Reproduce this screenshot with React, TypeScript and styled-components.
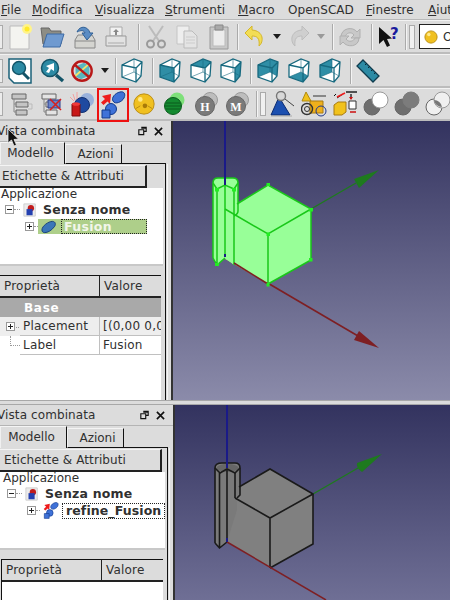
import styled, { createGlobalStyle } from 'styled-components';

const GlobalStyle = createGlobalStyle`
  html, body {
    margin: 0;
    padding: 0;
    background: #dcdcdc;
    font-family: 'DejaVu Sans', sans-serif;
  }
`;

const Screen = styled.div`
  position: relative;
  width: 450px;
  height: 600px;
  overflow: hidden;
  background: #dcdcdc;
  color: #303030;
  font-size: 12px;
`;

const MenuBar = styled.div`
  display: flex;
  height: 20px;
  align-items: center;
  padding-left: 1px;
  white-space: nowrap;
  border-bottom: 1px solid #b8b8b8;
  box-sizing: border-box;
`;

const MenuItem = styled.span<{ $w: number }>`
  flex: 0 0 ${(p) => p.$w}px;
  font-size: 12px;
  letter-spacing: 0.05px;
  u {
    text-underline-offset: 1px;
  }
`;

const Toolbar = styled.div<{ $h: number }>`
  display: flex;
  align-items: center;
  height: ${(p) => p.$h}px;
  box-sizing: border-box;
  border-bottom: 2px solid #bcbcbc;
  border-top: 1px solid #f2f2f2;
`;

const Handle = styled.div<{ $gap?: number }>`
  flex: 0 0 3px;
  height: 24px;
  margin: 0 ${(p) => p.$gap ?? 1}px 0 0;
  background: #ececec;
  border: 1px solid #aaa;
  border-left: none;
  box-sizing: border-box;
`;

const GripHandle = styled.div<{ $mr?: number }>`
  flex: 0 0 6px;
  height: 24px;
  margin: 0 ${(p) => p.$mr ?? 4}px 0 3px;
  box-sizing: border-box;
  background: #f0f0f0;
  border: 1px solid #aaa;
`;

const Separator = styled.div<{ $ml: number; $mr: number }>`
  flex: 0 0 1px;
  height: 26px;
  margin: 0 ${(p) => p.$mr}px 0 ${(p) => p.$ml}px;
  background: #aaa;
  box-shadow: 1px 0 0 #f4f4f4;
`;

const ToolButton = styled.div<{ $w?: number; $marked?: boolean }>`
  flex: 0 0 ${(p) => p.$w ?? 31}px;
  height: ${(p) => (p.$marked ? 34 : 31)}px;
  margin-top: ${(p) => (p.$marked ? 1 : 0)}px;
  display: flex;
  align-items: center;
  justify-content: center;
  box-sizing: border-box;
  border: 2px solid ${(p) => (p.$marked ? '#ee1111' : 'transparent')};
`;

const Arrow = styled.div<{ $dim?: boolean }>`
  flex: 0 0 0;
  margin: 0 5px;
  border-left: 4px solid transparent;
  border-right: 4px solid transparent;
  border-top: 5px solid ${(p) => (p.$dim ? '#9a9a9a' : '#1c1c1c')};
`;

const ComboBox = styled.div`
  display: flex;
  align-items: center;
  flex: 0 0 60px;
  gap: 5px;
  height: 23px;
  padding-left: 4px;
  background: #fff;
  border: 1px solid #222;
  border-right: none;
  font-size: 12px;
`;

const Main = styled.div<{ $h: number }>`
  display: flex;
  height: ${(p) => p.$h}px;
`;

const Dock = styled.div<{ $w: number }>`
  flex: 0 0 ${(p) => p.$w}px;
  display: flex;
  flex-direction: column;
  overflow: hidden;
`;

const DockTitle = styled.div`
  display: flex;
  align-items: center;
  height: 21px;
  flex: 0 0 21px;
  padding-right: 8px;
  box-sizing: border-box;
  justify-content: space-between;
  font-size: 12px;
  letter-spacing: 0.1px;
  border-bottom: 1px solid #b4b4b4;
  white-space: nowrap;
`;

const DockName = styled.span`
  margin-left: -3px;
`;

const DockButtons = styled.div`
  display: flex;
  gap: 7px;
  align-items: center;
`;

const Tabs = styled.div`
  display: flex;
  flex: 0 0 22px;
  align-items: flex-end;
  margin-right: 5px;
`;

const Tab = styled.div<{ $active?: boolean; $w: number }>`
  flex: 0 0 ${(p) => p.$w}px;
  box-sizing: border-box;
  height: ${(p) => (p.$active ? 22 : 20)}px;
  display: flex;
  align-items: center;
  justify-content: center;
  padding: ${(p) => (p.$active ? '0 4px 2px 0' : '0 0 0 4px')};
  font-size: 12px;
  border-top: 1px solid #f4f4f4;
  border-right: 1px solid #111;
  border-left: 1px solid #f0f0f0;
  border-bottom: ${(p) => (p.$active ? 'none' : '1px solid #111')};
`;

const TabFill = styled.div`
  flex: 1;
  border-bottom: 1px solid #111;
`;

const DockBody = styled.div`
  flex: 1;
  display: flex;
  padding-right: 2px;
  border-right: 3px solid #dcdcdc;
  box-shadow: inset -1px 0 0 #f4f4f4;
  min-height: 0;
`;

const Pane = styled.div`
  flex: 1;
  display: flex;
  flex-direction: column;
  min-width: 0;
  padding-right: 2px;
  border-right: 1px solid #111;
`;

const TreeHeader = styled.div<{ $w: number; $pl: number }>`
  width: ${(p) => p.$w}px;
  height: 23px;
  flex: 0 0 23px;
  box-sizing: border-box;
  display: flex;
  align-items: center;
  padding-left: ${(p) => p.$pl}px;
  margin-top: 1px;
  font-size: 12px;
  letter-spacing: 0.1px;
  white-space: nowrap;
  border-right: 2px solid #222;
  border-bottom: 2px solid #222;
  border-top: 1px solid #f4f4f4;
`;

const TreeArea = styled.div<{ $pl: number }>`
  height: 78px;
  flex: 0 0 78px;
  background: #fff;
  padding-left: ${(p) => p.$pl}px;
  box-sizing: border-box;
  border-bottom: 2px solid #c8c8c8;
`;

const AppLabel = styled.div`
  height: 13px;
  line-height: 13px;
  font-size: 12px;
`;

const TreeRow = styled.div<{ $indent: number }>`
  display: flex;
  align-items: center;
  height: 17px;
  padding-left: ${(p) => p.$indent}px;
  white-space: nowrap;
`;

const Expander = styled.span`
  flex: 0 0 7px;
  height: 7px;
  border: 1px solid #999;
  position: relative;
  background: #fff;
  &::before {
    content: '';
    position: absolute;
    left: 1px;
    right: 1px;
    top: 3px;
    height: 1px;
    background: #222;
  }
`;

const PlusExpander = styled(Expander)`
  &::after {
    content: '';
    position: absolute;
    top: 1px;
    bottom: 1px;
    left: 3px;
    width: 1px;
    background: #222;
  }
`;

const Connector = styled.span<{ $w: number; $mr: number }>`
  flex: 0 0 ${(p) => p.$w}px;
  margin-right: ${(p) => p.$mr}px;
  border-top: 1px dotted #999;
`;

const DocName = styled.span`
  margin-left: 6px;
  font-weight: 700;
  font-size: 12.5px;
  letter-spacing: 0.2px;
`;

const SelectedChip = styled.span`
  display: inline-flex;
  align-items: center;
  gap: 5px;
  height: 15px;
  width: 109px;
  padding-left: 3px;
  box-sizing: border-box;
  background: #aecf8a;
`;

const SelectedLabel = styled.span`
  flex: 1;
  height: 13px;
  line-height: 13px;
  padding-left: 2px;
  color: #f2f6ea;
  font-weight: 700;
  font-size: 12.5px;
  letter-spacing: 0.3px;
  border: 1px dotted #222;
`;

const RefinedIcon = styled.span`
  display: flex;
  margin-left: 3px;
`;

const FocusedLabel = styled.span`
  margin-left: 3px;
  height: 14px;
  line-height: 14px;
  padding: 0 3px;
  font-weight: 700;
  font-size: 12.5px;
  letter-spacing: 0.1px;
  border: 1px dotted #222;
`;

const Gap = styled.div`
  flex: 0 0 9px;
`;

const PropTable = styled.div<{ $ml: number }>`
  flex: 1;
  display: flex;
  flex-direction: column;
  background: #fff;
  margin: 0 2px 0 ${(p) => p.$ml}px;
  border-top: 1px solid #111;
  box-shadow: ${(p) => (p.$ml ? '-1px 0 0 #111' : 'none')};
`;

const PropHeader = styled.div`
  display: grid;
  grid-template-columns: 99px 1fr;
  flex: 0 0 22px;
  box-sizing: border-box;
  border-bottom: 2px solid #222;
  background: #dcdcdc;
`;

const PropHeaderCell = styled.div`
  display: flex;
  align-items: center;
  padding-left: 4px;
  font-size: 12px;
  letter-spacing: 0.2px;
  & + & {
    border-left: 1px solid #222;
  }
`;

const GroupRow = styled.div`
  flex: 0 0 19px;
  display: flex;
  align-items: center;
  padding-left: 24px;
  background: #a9a9a9;
  color: #fff;
  font-weight: 700;
  font-size: 12px;
  letter-spacing: 0.7px;
`;

const PropRow = styled.div<{ $shaded?: boolean }>`
  display: grid;
  grid-template-columns: 20px 79px 1fr;
  flex: 0 0 19px;
  box-sizing: border-box;
  white-space: nowrap;
  overflow: hidden;
  background: ${(p) => (p.$shaded ? '#eeeeee' : '#fff')};
`;

const PropGutter = styled.div<{ $last?: boolean }>`
  position: relative;
  display: flex;
  align-items: center;
  padding-left: 6px;
  font-size: 12px;
  &::after {
    content: '';
    position: absolute;
    left: 10px;
    top: ${(p) => (p.$last ? '0' : '50%')};
    width: 9px;
    height: ${(p) => (p.$last ? '9px' : '0')};
    border-left: ${(p) => (p.$last ? '1px dotted #999' : 'none')};
    border-bottom: 1px dotted #999;
    z-index: 0;
  }
  & > * {
    z-index: 1;
  }
`;

const PropCell = styled.div`
  display: flex;
  align-items: center;
  padding-left: 3px;
  font-size: 12px;
  letter-spacing: 0.2px;
  overflow: hidden;
  border-bottom: 1px solid #c0c0c0;
  & + & {
    border-left: 1px solid #c0c0c0;
  }
`;

const Viewport = styled.div`
  flex: 1;
  min-width: 0;
  border-left: 2px solid #333;
  display: flex;
`;

const ViewSvg = styled.svg`
  display: block;
  width: 100%;
  height: 100%;
`;

const Split = styled.div`
  height: 5px;
  background: #dcdcdc;
  border-top: 1px solid #a8a8a8;
  border-bottom: 1px solid #a8a8a8;
  box-sizing: border-box;
`;

const Cursor = styled.svg`
  position: absolute;
  left: 7px;
  top: 128px;
`;

const MirroredSvg = styled.svg`
  transform: scaleX(-1);
`;

type Face = 'none' | 'front' | 'top' | 'right' | 'left' | 'rear' | 'bottom';

const ViewCube = ({ face }: { face: Face }) => {
  const teal = '#2f8ea6';
  const outline = 'M2 8 L14 2 L22 5 L21 19 L16 25 L2 20 Z';
  return (
    <svg width="24" height="27" viewBox="0 0 24 27">
      <path d={outline} fill="#fff" />
      {face === 'front' && <path d="M2 8 L16 11 L16 25 L2 20 Z" fill={teal} />}
      {face === 'top' && <path d="M2 8 L14 2 L22 5 L16 11 Z" fill={teal} />}
      {face === 'right' && <path d="M16 11 L22 5 L21 19 L16 25 Z" fill={teal} />}
      {face === 'rear' && <path d="M2 8 L14 2 L14 15 L2 20 Z M14 2 L22 5 L21 19 L14 15 Z" fill={teal} />}
      {face === 'bottom' && <path d="M2 20 L14 15 L21 19 L16 25 Z" fill={teal} />}
      {face === 'left' && <path d="M2 8 L14 2 L14 15 L2 20 Z" fill={teal} />}
      <path d={`${outline} M2 8 L16 11 L22 5 M16 11 V25`} fill="none" stroke="#17697f" strokeWidth="1.3" />
      <path d="M14 2 V15 L2 20 M14 15 L21 19" fill="none" stroke="#17697f" strokeWidth="0.6" />
    </svg>
  );
};

const NewDoc = () => (
  <svg width="26" height="28" viewBox="0 0 26 28">
    <path d="M3 3 H22 V26 H3 Z" fill="#f4f4f0" stroke="#bbb" />
    <circle cx="20" cy="6" r="5" fill="#fff38a" />
    <circle cx="20" cy="6" r="2.5" fill="#ffe92a" />
  </svg>
);

const OpenDoc = () => (
  <svg width="26" height="26" viewBox="0 0 26 26">
    <path d="M2 4 H10 L12 7 H22 V20 H4 Z" fill="#8d8d85" stroke="#666" />
    <path d="M8 10 H25 L21 23 H4 Z" fill="#6f9ad0" stroke="#3d6aa5" />
  </svg>
);

const SaveDoc = () => (
  <svg width="26" height="26" viewBox="0 0 26 26">
    <path d="M3 16 L6 11 H20 L23 16 V24 H3 Z" fill="#d4d4d0" stroke="#888" />
    <path d="M3 17 H23" stroke="#888" />
    <path d="M5 8 C8 1 16 2 18 9 L21 9 L15 16 L10 9 L13 9 C12 6 9 6 5 8 Z" fill="#5a8cc4" stroke="#2f5f95" />
  </svg>
);

const PrintDoc = () => (
  <svg width="26" height="26" viewBox="0 0 26 26">
    <path d="M7 3 H19 V12 H7 Z" fill="#f2f2f2" stroke="#aaa" />
    <path d="M3 12 H23 V22 H3 Z" fill="#e2e2e2" stroke="#999" />
    <path d="M13 5 L16 8 H14 V11 H12 V8 H10 Z" fill="#888" />
    <path d="M5 19 H21" stroke="#aaa" />
  </svg>
);

const Scissors = () => (
  <svg width="24" height="26" viewBox="0 0 24 26" fill="none" stroke="#9a9a9a" strokeWidth="1.6">
    <path d="M5 2 L15 17 M19 2 L9 17" stroke="#bbb" strokeWidth="2" />
    <circle cx="6.5" cy="20" r="3.5" strokeWidth="2" />
    <circle cx="17.5" cy="20" r="3.5" strokeWidth="2" />
  </svg>
);

const CopyDoc = () => (
  <svg width="24" height="26" viewBox="0 0 24 26">
    <path d="M2 2 H14 V20 H2 Z" fill="#eee" stroke="#c4c4c4" />
    <path d="M9 7 H17 L22 12 V24 H9 Z" fill="#e4e4e4" stroke="#bbb" />
    <path d="M11 13 H20 M11 16 H20 M11 19 H20" stroke="#ccc" />
  </svg>
);

const Paste = () => (
  <svg width="22" height="28" viewBox="0 0 22 28">
    <path d="M2 4 H20 V26 H2 Z" fill="#c8c8c8" stroke="#9a9a9a" />
    <path d="M5 7 H17 V23 H5 Z" fill="#ececec" stroke="#bbb" />
    <path d="M7 2 H15 V7 H7 Z" fill="#aaa" stroke="#888" />
  </svg>
);

const Undo = () => (
  <svg width="22" height="24" viewBox="0 0 22 24">
    <path d="M8 1 L1 8 L8 15 V11 C13 11 16 13 15 21 C20 17 20 6 8 5 Z" fill="#f2dd55" stroke="#d4b62a" />
  </svg>
);

const Redo = () => (
  <MirroredSvg width="22" height="24" viewBox="0 0 22 24">
    <path d="M8 1 L1 8 L8 15 V11 C13 11 16 13 15 21 C20 17 20 6 8 5 Z" fill="#cfcfcf" stroke="#bdbdbd" />
  </MirroredSvg>
);

const Refresh = () => (
  <svg width="24" height="24" viewBox="0 0 24 24" fill="#c8c8c8" stroke="#b0b0b0">
    <path d="M3 12 C3 3 15 1 19 7 L22 4 V13 H13 L16 10 C13 6 8 8 7 12 Z" />
    <path d="M21 13 C21 22 9 23 5 17 L2 20 V11 H11 L8 14 C11 18 16 16 17 13 Z" />
  </svg>
);

const WhatsThis = () => (
  <svg width="24" height="24" viewBox="0 0 24 24">
    <path d="M2 2 L2 19 L6.5 15 L10 22 L13 20.5 L10 14 L15 13.5 Z" fill="#111" />
    <text x="13" y="14" fontSize="15" fontWeight="700" fontFamily="DejaVu Sans" fill="#1a1a9c">?</text>
  </svg>
);

const FitAll = () => (
  <svg width="26" height="28" viewBox="0 0 26 28">
    <path d="M2 2 H24 V26 H7 L2 21 Z" fill="#fff" stroke="#1a6078" strokeWidth="1.5" />
    <circle cx="12" cy="11" r="6.5" fill="#2c8aa4" stroke="#135468" strokeWidth="1.4" />
    <path d="M16 16 L22 22" stroke="#135468" strokeWidth="3" />
  </svg>
);

const FitSelection = () => (
  <svg width="26" height="26" viewBox="0 0 26 26">
    <circle cx="11" cy="10" r="8.5" fill="#2c8aa4" stroke="#135468" strokeWidth="1.5" />
    <path d="M15 5 L7 8 L10 10 L7 14 L10 15 L12 11 L15 13 Z" fill="#fff" />
    <path d="M17 17 L24 23" stroke="#135468" strokeWidth="3.4" />
  </svg>
);

const NoDraw = () => (
  <svg width="24" height="24" viewBox="0 0 26 26">
    <path d="M6 8 L15 4 L21 7 L21 18 L12 22 L6 19 Z" fill="#58b6c0" />
    <path d="M5 19 L21 5" stroke="#f3e26a" strokeWidth="2" />
    <circle cx="13" cy="13" r="10.5" fill="none" stroke="#b81818" strokeWidth="2.6" />
    <path d="M5 6 L21 20" stroke="#b81818" strokeWidth="2.6" />
  </svg>
);

const Measure = () => (
  <svg width="24" height="24" viewBox="0 0 24 24">
    <path d="M7 1 L23 17 L17 23 L1 7 Z" fill="#2c8aa4" stroke="#103c4e" strokeWidth="1.3" />
    <path d="M9 6 L11 4 M12 9 L14 7 M15 12 L17 10 M18 15 L20 13" stroke="#0c2d3a" />
  </svg>
);

const TreeViewIcon = ({ crossed }: { crossed?: boolean }) => (
  <svg width="24" height="26" viewBox="0 0 24 26">
    <path d="M2 3 H16 V8 H2 Z M6 11 H18 V16 H6 Z M6 19 H17 V24 H6 Z" fill={crossed ? '#e4e4e4' : '#c4c4c4'} stroke="#666" />
    <path d="M4 8 V21 H6 M4 13 H6" fill="none" stroke="#888" />
    {crossed && <path d="M8 9 H20 V17 H8 Z" fill="#6a86c8" stroke="#2a3a8a" />}
    {crossed && <path d="M10 8 L21 19 M21 8 L10 19" stroke="#d42020" strokeWidth="1.6" />}
    {!crossed && <path d="M18 13 H22 V18 H18" fill="none" stroke="#bbb" />}
  </svg>
);

const Primitives = () => (
  <svg width="26" height="26" viewBox="0 0 26 26">
    <circle cx="18" cy="9" r="7" fill="#9ab2dc" />
    <circle cx="13" cy="14" r="7.5" fill="#1f4aa0" stroke="#123070" />
    <path d="M3 13 H11 V25 H3 Z" fill="#c81818" stroke="#7c0c0c" />
    <ellipse cx="7" cy="13" rx="4" ry="1.8" fill="#ee3a3a" />
    <path d="M4 3 L6 9 M8 1 L8 8 M1 6 L5 10" stroke="#f2a0a0" />
  </svg>
);

const RefineIcon = ({ w = 26, h = 28 }: { w?: number; h?: number }) => (
  <svg width={w} height={h} viewBox="0 0 26 28">
    <path d="M2 5 L11 3 L10 13 L7.5 10.5 L3.5 14 L1 11.5 L5 8 Z" fill="#ee1c1c" />
    <path d="M13 10 C11 7 15 2 20 1 C24 0 26 3 24 7 C22 11 15 14 13 10 Z" fill="#3f72d8" stroke="#123a8c" />
    <circle cx="11" cy="18" r="5.5" fill="#3f72d8" stroke="#123a8c" />
    <path d="M2 19 H10 V27 H2 Z" fill="#3f72d8" stroke="#123a8c" />
  </svg>
);

const Revolve = () => (
  <svg width="24" height="24" viewBox="0 0 26 26">
    <circle cx="13" cy="13" r="11" fill="#f0c020" stroke="#b78a10" />
    <circle cx="9" cy="8" r="2.5" fill="#ffe98a" />
    <circle cx="14" cy="15" r="2.5" fill="#a87a08" />
    <path d="M4 18 L9 15 M22 18 L17 15" stroke="#b78a10" />
  </svg>
);

const GreenBalls = () => (
  <svg width="26" height="26" viewBox="0 0 26 26">
    <circle cx="15" cy="9" r="7.5" fill="#7ee07a" />
    <circle cx="11" cy="15" r="8.5" fill="#148a30" stroke="#0a5a1c" />
    <path d="M4 12 H18 M3 15 H19 M4 18 H18" stroke="#0a5a1c" />
  </svg>
);

const LetterBalls = ({ letter }: { letter: string }) => (
  <svg width="26" height="26" viewBox="0 0 26 26">
    <circle cx="16" cy="9" r="7.5" fill="#bdbdbd" stroke="#999" />
    <circle cx="11" cy="15" r="9.5" fill="#7a7a7a" stroke="#666" />
    <text x="11" y="19.5" textAnchor="middle" fontSize="12" fontWeight="700" fontFamily="Liberation Serif" fill="#fff">{letter}</text>
  </svg>
);

const Inspect = () => (
  <svg width="26" height="26" viewBox="0 0 26 26">
    <path d="M9 6 L20 24 H1 Z" fill="#1b4fb0" stroke="#0a2a70" />
    <circle cx="11" cy="5" r="4.5" fill="#d8d8d8" stroke="#777" strokeWidth="1.4" />
    <path d="M15 8 L24 15" stroke="#444" />
    <path d="M1 25 H22" stroke="#aaa" />
  </svg>
);

const Shapes = () => (
  <svg width="26" height="26" viewBox="0 0 26 26">
    <path d="M5 1 L10 10 H1 Z" fill="#f1c21c" stroke="#b08a10" />
    <path d="M12 5 H25" stroke="#333" />
    <path d="M9 10 H22 V22 H9 Z" fill="#efb01c" stroke="#a87a10" />
    <circle cx="6" cy="18" r="5.5" fill="none" stroke="#333" strokeWidth="1.4" />
    <circle cx="6" cy="18" r="2.5" fill="none" stroke="#333" />
    <circle cx="20" cy="20" r="5" fill="none" stroke="#223a8a" />
  </svg>
);

const Mirror = () => (
  <svg width="26" height="26" viewBox="0 0 26 26">
    <path d="M2 5 L4 3 M5 7 L11 3" stroke="#111" />
    <path d="M5 6 L13 2" stroke="#ee1c1c" strokeWidth="1.5" />
    <path d="M14 1 H25 M19 3 V8" stroke="#222" strokeWidth="1.4" />
    <path d="M19 9 L17 6 H21 Z" fill="#cc1111" />
    <path d="M17 10 H24 V18 H17 Z" fill="#fff" stroke="#333" />
    <path d="M18 21 L24 21" stroke="#cc1111" strokeWidth="1.5" />
    <path d="M2 14 L6 11 H14 V21 L10 24 H2 Z" fill="#f1c21c" stroke="#a87a10" />
  </svg>
);

const BoolBalls = ({ mode }: { mode: 'cut' | 'fuse' | 'common' }) => (
  <svg width="26" height="26" viewBox="0 0 26 26">
    <circle cx="9" cy="16" r="8" fill={mode === 'common' ? '#f0f0f0' : '#6e6e6e'} stroke="#666" />
    <circle cx="17" cy="9" r="8" fill={mode === 'cut' ? '#fff' : mode === 'fuse' ? '#7c7c7c' : '#f0f0f0'} stroke={mode === 'fuse' ? '#7c7c7c' : '#999'} />
    {mode === 'common' && <path d="M9 9 A8 8 0 0 1 17 16 A8 8 0 0 1 9 9" fill="#777" />}
  </svg>
);

const SphereIcon = () => (
  <svg width="14" height="14" viewBox="0 0 16 16">
    <circle cx="8" cy="8" r="7" fill="#f0c020" stroke="#b78a10" />
    <circle cx="5.5" cy="5" r="2" fill="#ffe98a" />
  </svg>
);

const DocIcon = () => (
  <svg width="14" height="16" viewBox="0 0 16 16">
    <path d="M1 1 H14 V15 H1 Z" fill="#ececec" stroke="#ccc" />
    <circle cx="9" cy="6" r="3.6" fill="#c21c1c" />
    <path d="M4 7 H11 V14 H4 Z" fill="#2440b0" />
  </svg>
);

const FusionIcon = () => (
  <svg width="15" height="14" viewBox="0 0 16 14">
    <path d="M1 10 C1 6 8 1 12 1 C16 1 16 5 14 7 C11 11 7 13 4 13 C2 13 1 12 1 10 Z" fill="#3a76b8" stroke="#163f78" />
  </svg>
);

const FloatIcon = () => (
  <svg width="9" height="10" viewBox="0 0 11 11" fill="none" stroke="#111" strokeWidth="1.4">
    <path d="M4 1 H10 V6 H7 M1 4 H7 V10 H1 Z M4 2 H10" />
  </svg>
);

const CloseIcon = () => (
  <svg width="9" height="9" viewBox="0 0 10 10" stroke="#111" strokeWidth="1.8">
    <path d="M1 1 L9 9 M9 1 L1 9" />
  </svg>
);

const TopScene = () => (
  <ViewSvg viewBox="173 121 277 279" preserveAspectRatio="none">
    <defs>
      <linearGradient id="skyTop" x1="0" y1="0" x2="0" y2="1">
        <stop offset="0" stopColor="#33335f" />
        <stop offset="1" stopColor="#8b8baa" />
      </linearGradient>
    </defs>
    <rect x="173" y="121" width="277" height="279" fill="url(#skyTop)" />
    <path d="M225 258 L358 336" stroke="#7e1f23" strokeWidth="1.6" />
    <path d="M379 348 L359 331 L354 340 Z" fill="#7e1f23" />
    <path d="M311 209 L356 183" stroke="#1e7a1e" strokeWidth="1.4" />
    <path d="M379 170 L354 179 L359 188 Z" fill="#1e7a1e" />
    <path d="M236 204 L268 185 L311 209 L311 260 L268 284 L225 259 L225 210 Z" fill="#98ff98" />
    <path d="M213 183 Q213 178 218 178 H233 Q238 178 238 183 V213 L234 216 V265 L225 258 L217 265 L213 258 Z" fill="#98ff98" />
    <g fill="none" stroke="#19c819" strokeWidth="1.5">
      <path d="M237 204 L268 185 L311 209 L311 260 L268 284" />
      <path d="M225 209 L268 234 L311 209 M268 234 V284" />
      <path d="M213 258 V183 Q213 178 218 178 H233 Q238 178 238 183 V211 Q238 214 234 216" />
      <path d="M213 183 L217 189 L225 185 L234 189 L238 183" />
      <path d="M217 189 V265 M234 189 V265 M213 258 L217 265 L225 258" />
      <path d="M225 185 V256" />
    </g>
    <path d="M234 263 L268 284" stroke="#7e1f23" strokeWidth="1.6" />
    <path d="M225 121 V185" stroke="#1a1a88" strokeWidth="2" />
    <path d="M225 254 V257" stroke="#1a1a88" strokeWidth="2" />
    <g fill="#22ee22">
      <rect x="266.5" y="183" width="3.5" height="3" />
      <rect x="309" y="208" width="4" height="3.5" />
      <rect x="266.5" y="232.5" width="3.5" height="3.5" />
      <rect x="309" y="258" width="3.5" height="3.5" />
      <rect x="266.5" y="283" width="3" height="3.5" />
      <rect x="215" y="263" width="4" height="3" />
      <rect x="215" y="188" width="4" height="3.5" />
      <rect x="232" y="188" width="4" height="3.5" />
    </g>
  </ViewSvg>
);

const BottomScene = () => (
  <ViewSvg viewBox="175 405 275 195" preserveAspectRatio="none">
    <defs>
      <linearGradient id="skyBottom" x1="0" y1="0" x2="0" y2="1">
        <stop offset="0" stopColor="#33335f" />
        <stop offset="1" stopColor="#6f6f95" />
      </linearGradient>
    </defs>
    <rect x="175" y="405" width="275" height="195" fill="url(#skyBottom)" />
    <path d="M313 494 L358 468" stroke="#1e7a1e" strokeWidth="1.4" />
    <path d="M382 454 L357 463 Q356 468 362 472 Z" fill="#1e7a1e" />
    <path d="M239 487 L270 469 L313 494 L313 544 L270 568 L227 542 V490 Z" fill="#808080" />
    <path d="M215 468 Q215 463 222 463 H235 Q240 463 240 468 V495 L237 498 V510 L227 542 L219 548 L215 543 Z" fill="#7a7a7a" />
    <ellipse cx="227.5" cy="468" rx="11" ry="4" fill="#666" />
    <g fill="none" stroke="#1a1a1a" strokeWidth="1.6">
      <path d="M239 487 L270 469 L313 494 L313 544 L270 568" />
      <path d="M235 498 L270 518 L313 494 M270 518 V568" />
      <path d="M215 543 V468 Q215 463 222 463 H235 Q240 463 240 468 V495 L237 498" />
      <path d="M215 468 L220 473 L227 469 L235 473 L240 468" />
      <path d="M219.5 473 V548 M235 473 V498 M215 543 L219.5 548 L227 542" />
      <path d="M227 469 V540" />
    </g>
    <path d="M227 542 L326 600" stroke="#7e1f23" strokeWidth="1.5" />
    <path d="M227 405 V468" stroke="#1a1a88" strokeWidth="2" />
    <path d="M227 538 V542" stroke="#1a1a88" strokeWidth="2" />
  </ViewSvg>
);

const Tree = ({ bottom }: { bottom?: boolean }) => (
  <TreeArea $pl={bottom ? 3 : 1}>
    <AppLabel>Applicazione</AppLabel>
    <TreeRow $indent={4}>
      <Expander />
      <Connector $w={6} $mr={3} />
      <DocIcon />
      <DocName>Senza nome</DocName>
    </TreeRow>
    <TreeRow $indent={24}>
      <PlusExpander />
      <Connector $w={4} $mr={0} />
      {bottom ? (
        <>
          <RefinedIcon><RefineIcon w={16} h={17} /></RefinedIcon>
          <FocusedLabel>refine_Fusion</FocusedLabel>
        </>
      ) : (
        <SelectedChip>
          <FusionIcon />
          <SelectedLabel>Fusion</SelectedLabel>
        </SelectedChip>
      )}
    </TreeRow>
  </TreeArea>
);

const Panel = ({ bottom }: { bottom?: boolean }) => (
  <Dock $w={bottom ? 173 : 171}>
    <DockTitle>
      <DockName>Vista combinata</DockName>
      <DockButtons>
        <FloatIcon />
        <CloseIcon />
      </DockButtons>
    </DockTitle>
    <Tabs>
      <Tab $active $w={bottom ? 67 : 65}>Modello</Tab>
      <Tab $w={57}>Azioni</Tab>
      <TabFill />
    </Tabs>
    <DockBody>
      <Pane>
        <TreeHeader $w={bottom ? 162 : 147} $pl={bottom ? 4 : 2}>Etichette &amp; Attributi</TreeHeader>
        <Tree bottom={bottom} />
        <Gap />
        <PropTable $ml={bottom ? 2 : 0}>
          <PropHeader>
            <PropHeaderCell>Proprietà</PropHeaderCell>
            <PropHeaderCell>Valore</PropHeaderCell>
          </PropHeader>
          {!bottom && (
            <>
              <GroupRow>Base</GroupRow>
              <PropRow $shaded>
                <PropGutter><PlusExpander /></PropGutter>
                <PropCell>Placement</PropCell>
                <PropCell>[(0,00 0,00</PropCell>
              </PropRow>
              <PropRow>
                <PropGutter $last />
                <PropCell>Label</PropCell>
                <PropCell>Fusion</PropCell>
              </PropRow>
            </>
          )}
        </PropTable>
      </Pane>
    </DockBody>
  </Dock>
);

export default function App() {
  return (
    <>
      <GlobalStyle />
      <Screen>
        <MenuBar>
          <MenuItem $w={31}><u>F</u>ile</MenuItem>
          <MenuItem $w={63}><u>M</u>odifica</MenuItem>
          <MenuItem $w={70}><u>V</u>isualizza</MenuItem>
          <MenuItem $w={73}><u>S</u>trumenti</MenuItem>
          <MenuItem $w={50}><u>M</u>acro</MenuItem>
          <MenuItem $w={78}>OpenSCAD</MenuItem>
          <MenuItem $w={62}><u>F</u>inestre</MenuItem>
          <MenuItem $w={22}><u>A</u>iut</MenuItem>
        </MenuBar>
        <Toolbar $h={34}>
          <Handle />
          <ToolButton><NewDoc /></ToolButton>
          <ToolButton $w={33}><OpenDoc /></ToolButton>
          <ToolButton $w={33}><SaveDoc /></ToolButton>
          <ToolButton $w={25}><PrintDoc /></ToolButton>
          <Separator $ml={7} $mr={1} />
          <ToolButton $w={31}><Scissors /></ToolButton>
          <ToolButton $w={32}><CopyDoc /></ToolButton>
          <ToolButton $w={31}><Paste /></ToolButton>
          <Separator $ml={3} $mr={4} />
          <ToolButton $w={26}><Undo /></ToolButton>
          <Arrow />
          <ToolButton $w={24}><Redo /></ToolButton>
          <Arrow $dim />
          <Separator $ml={2} $mr={3} />
          <ToolButton $w={26}><Refresh /></ToolButton>
          <Separator $ml={7} $mr={3} />
          <ToolButton $w={28}><WhatsThis /></ToolButton>
          <Separator $ml={2} $mr={0} />
          <GripHandle />
          <ComboBox><SphereIcon />Op</ComboBox>
        </Toolbar>
        <Toolbar $h={34}>
          <Handle />
          <ToolButton $w={32}><FitAll /></ToolButton>
          <ToolButton $w={32}><FitSelection /></ToolButton>
          <ToolButton $w={28}><NoDraw /></ToolButton>
          <Arrow />
          <Separator $ml={1} $mr={0} />
          <ToolButton><ViewCube face="none" /></ToolButton>
          <Separator $ml={5} $mr={1} />
          <ToolButton><ViewCube face="front" /></ToolButton>
          <ToolButton><ViewCube face="top" /></ToolButton>
          <ToolButton $w={30}><ViewCube face="right" /></ToolButton>
          <Separator $ml={4} $mr={1} />
          <ToolButton><ViewCube face="rear" /></ToolButton>
          <ToolButton><ViewCube face="bottom" /></ToolButton>
          <ToolButton><ViewCube face="left" /></ToolButton>
          <Separator $ml={5} $mr={1} />
          <ToolButton $w={32}><Measure /></ToolButton>
        </Toolbar>
        <Toolbar $h={33}>
          <Handle $gap={3} />
          <ToolButton><TreeViewIcon /></ToolButton>
          <ToolButton $w={30}><TreeViewIcon crossed /></ToolButton>
          <ToolButton $w={30}><Primitives /></ToolButton>
          <ToolButton $w={32} $marked><RefineIcon /></ToolButton>
          <ToolButton $w={29}><Revolve /></ToolButton>
          <ToolButton $w={33}><GreenBalls /></ToolButton>
          <ToolButton><LetterBalls letter="H" /></ToolButton>
          <ToolButton><LetterBalls letter="M" /></ToolButton>
          <Separator $ml={3} $mr={0} />
          <GripHandle $mr={1} />
          <ToolButton><Inspect /></ToolButton>
          <ToolButton><Shapes /></ToolButton>
          <ToolButton><Mirror /></ToolButton>
          <ToolButton><BoolBalls mode="cut" /></ToolButton>
          <ToolButton><BoolBalls mode="fuse" /></ToolButton>
          <ToolButton><BoolBalls mode="common" /></ToolButton>
        </Toolbar>
        <Main $h={279}>
          <Panel />
          <Viewport><TopScene /></Viewport>
        </Main>
        <Split />
        <Main $h={195}>
          <Panel bottom />
          <Viewport><BottomScene /></Viewport>
        </Main>
        <Cursor width="14" height="20" viewBox="0 0 14 20">
          <path d="M1 1 V15 L4.5 12 L7 18 L9.5 17 L7 11.5 L11.5 11 Z" fill="#111" stroke="#eee" strokeWidth="0.8" />
        </Cursor>
      </Screen>
    </>
  );
}
